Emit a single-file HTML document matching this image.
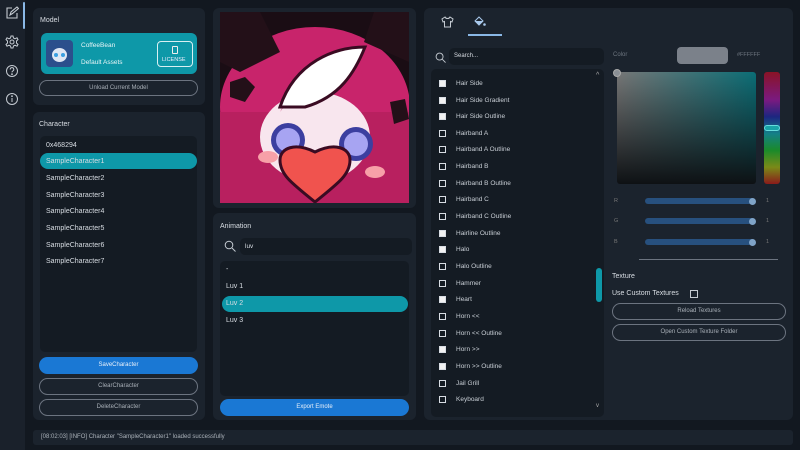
<!DOCTYPE html>
<html><head><meta charset="utf-8"><style>
*{margin:0;padding:0;box-sizing:border-box}
body{width:800px;height:450px;background:#121820;font-family:"Liberation Sans",sans-serif;color:#d8dde3;font-size:7px;position:relative;overflow:hidden}
.a{position:absolute}
.side{left:0;top:0;width:25px;height:450px;background:#1a212b}
.panel{background:#1b232d;border-radius:6px}
.list{background:#141b23;border-radius:5px}
.btn{border:1px solid #6c7480;border-radius:9px;text-align:center;color:#a9b0b8;font-size:6px}
.h{font-size:7px;color:#d8dde3}
.row{position:absolute;left:6px;font-size:7px;color:#d8dde3}
.cb{position:absolute;left:8px;width:7px;height:7px;border:1px solid #d8dde3}
.cb.f{background:#f2f2f2}
.it{position:absolute;left:25px;font-size:6.5px;color:#c8ced5}
.sl{height:6px;border-radius:3px;background:#27507e}
.knob{width:7px;height:7px;border-radius:50%;background:#7fa3c7;top:-0.5px}
</style></head><body>
<div class="a side">
 <div class="a" style="left:23px;top:2px;width:2px;height:27px;background:#8ab8e6;border-radius:1px"></div>
 <svg class="a" style="left:5px;top:6px" width="14" height="14" viewBox="0 0 14 14" fill="none" stroke="#c5cbd2" stroke-width="1.1"><path d="M7 2H2v10h10V7"/><path d="M5 9l1-3 6-5 1.5 1.5-6 5z"/></svg>
 <svg class="a" style="left:5px;top:35px" width="14" height="14" viewBox="0 0 14 14" fill="none" stroke="#c5cbd2" stroke-width="1"><circle cx="7" cy="7" r="2"/><path d="M6 1h2l.5 2 1.5.8 2-1 1 1.7-1.5 1.5v2l1.5 1.5-1 1.7-2-1-1.5.8L8 13H6l-.5-2-1.5-.8-2 1-1-1.7L2.5 8V6L1 4.5l1-1.7 2 1 1.5-.8z"/></svg>
 <svg class="a" style="left:5px;top:64px" width="14" height="14" viewBox="0 0 14 14" fill="none" stroke="#c5cbd2" stroke-width="1"><circle cx="7" cy="7" r="5.5"/><path d="M5.2 5.5a1.8 1.8 0 1 1 2.5 1.6c-.6.3-.7.7-.7 1.3"/><circle cx="7" cy="10.2" r=".4" fill="#c5cbd2"/></svg>
 <svg class="a" style="left:5px;top:92px" width="14" height="14" viewBox="0 0 14 14" fill="none" stroke="#c5cbd2" stroke-width="1"><circle cx="7" cy="7" r="5.5"/><path d="M7 6v4"/><circle cx="7" cy="4.2" r=".4" fill="#c5cbd2"/></svg>
</div>

<!-- Model -->
<div class="a panel" style="left:33px;top:8px;width:172px;height:97px">
 <div class="a h" style="left:7px;top:9px">Model</div>
 <div class="a" style="left:8px;top:25px;width:156px;height:41px;background:#0e98a8;border-radius:6px">
  <div class="a" style="left:5px;top:7px;width:27px;height:27px;border-radius:4px;background:#2b4f8c"><div class="a" style="left:6px;top:8px;width:15px;height:14px;background:#dfe6f3;border-radius:50%"></div><div class="a" style="left:8px;top:13px;width:4px;height:4px;background:#3a9fe0;border-radius:50%"></div><div class="a" style="left:15px;top:13px;width:4px;height:4px;background:#3a9fe0;border-radius:50%"></div></div>
  <div class="a" style="left:40px;top:9px;font-size:6.5px;color:#e8f5f7">CoffeeBean</div>
  <div class="a" style="left:40px;top:26px;font-size:6.5px;color:#e8f5f7">Default Assets</div>
  <div class="a" style="left:116px;top:8px;width:36px;height:26px;border:1px solid #d8f0f3;border-radius:4px"><div class="a" style="left:14px;top:4px;width:6px;height:8px;border:1px solid #eee;border-radius:1px"></div><div class="a" style="left:4px;top:15px;font-size:5.5px;color:#eef">LICENSE</div></div>
 </div>
 <div class="a btn" style="left:6px;top:72px;width:159px;height:16px;line-height:14px">Unload Current Model</div>
</div>

<!-- Character -->
<div class="a panel" style="left:33px;top:112px;width:172px;height:308px">
 <div class="a h" style="left:6px;top:9px">Character</div>
 <div class="a list" style="left:7px;top:24px;width:157px;height:216px">
  <div class="row" style="top:6px">0x468294</div>
  <div class="a" style="left:0;top:17px;width:157px;height:16px;background:#0e98a8;border-radius:8px"></div>
  <div class="row" style="top:22px">SampleCharacter1</div>
  <div class="row" style="top:39px">SampleCharacter2</div>
  <div class="row" style="top:56px">SampleCharacter3</div>
  <div class="row" style="top:72px">SampleCharacter4</div>
  <div class="row" style="top:89px">SampleCharacter5</div>
  <div class="row" style="top:106px">SampleCharacter6</div>
  <div class="row" style="top:122px">SampleCharacter7</div>
 </div>
 <div class="a" style="left:6px;top:245px;width:159px;height:17px;background:#1a78d4;border-radius:9px;text-align:center;line-height:17px;font-size:6px;color:#e8f0fa">SaveCharacter</div>
 <div class="a btn" style="left:6px;top:266px;width:159px;height:17px;line-height:15px">ClearCharacter</div>
 <div class="a btn" style="left:6px;top:287px;width:159px;height:17px;line-height:15px">DeleteCharacter</div>
</div>

<!-- Image -->
<div class="a panel" style="left:213px;top:8px;width:203px;height:200px">
 <svg class="a" style="left:7px;top:4px" width="189" height="191" viewBox="0 0 189 191">
  <rect width="189" height="191" rx="3" fill="#1a0d14"/>
  <ellipse cx="95" cy="95" rx="95" ry="80" fill="#c8246b"/>
  <rect x="0" y="100" width="189" height="91" fill="#b8205f"/>
  <path d="M0 0h40l20 40-40 20-20-10z" fill="#231018"/>
  <path d="M189 0h-35l-10 30 45 20z" fill="#231018"/>
  <ellipse cx="95" cy="125" rx="55" ry="45" fill="#f8e6ee"/>
  <path d="M60 100c20-30 60-35 90-5l-10-40-50-10z" fill="#c8246b"/>
  <path d="M60 95c15-45 55-60 85-60-10 25-25 50-60 60z" fill="#ffffff" stroke="#3a0b22" stroke-width="3"/>
  <ellipse cx="68" cy="128" rx="17" ry="17" fill="#3c3fa0"/><ellipse cx="68" cy="128" rx="12" ry="12" fill="#a7a4f2"/>
  <ellipse cx="136" cy="132" rx="17" ry="17" fill="#3c3fa0"/><ellipse cx="136" cy="132" rx="12" ry="12" fill="#a7a4f2"/>
  <ellipse cx="48" cy="145" rx="10" ry="6" fill="#f7a0a8"/><ellipse cx="155" cy="160" rx="10" ry="6" fill="#f7a0a8"/>
  <path d="M95 190c-25-20-35-28-35-42 0-12 15-18 35-8 20-10 35-4 35 8 0 14-10 22-35 42z" fill="#f0534e" stroke="#3a0b22" stroke-width="3"/>
  <path d="M10 70l15-5 10 10-10 15-15-5z" fill="#231018"/><path d="M170 90l15-3 4 20-15 5z" fill="#231018"/>
 </svg>
</div>

<!-- Animation -->
<div class="a panel" style="left:213px;top:213px;width:203px;height:207px">
 <div class="a h" style="left:7px;top:10px">Animation</div>
 <svg class="a" style="left:11px;top:27px" width="12" height="12" viewBox="0 0 12 12" fill="none" stroke="#c5cbd2" stroke-width="1"><circle cx="5" cy="5" r="3.8"/><path d="M8 8l3.5 3.5"/></svg>
 <div class="a list" style="left:27px;top:25px;width:172px;height:17px"><div class="a" style="left:5px;top:5px;font-size:6.5px">luv</div></div>
 <div class="a list" style="left:7px;top:48px;width:189px;height:135px">
  <div class="row" style="top:5px">-</div>
  <div class="row" style="top:22px">Luv 1</div>
  <div class="a" style="left:2px;top:35px;width:186px;height:16px;background:#0e98a8;border-radius:8px"></div>
  <div class="row" style="top:39px">Luv 2</div>
  <div class="row" style="top:56px">Luv 3</div>
 </div>
 <div class="a" style="left:7px;top:186px;width:189px;height:17px;background:#1a78d4;border-radius:9px;text-align:center;line-height:17px;font-size:6px;color:#e8f0fa">Export Emote</div>
</div>

<!-- Right -->
<div class="a panel" style="left:424px;top:8px;width:369px;height:412px">
 <svg class="a" style="left:17px;top:8px" width="13" height="12" viewBox="0 0 13 12" fill="none" stroke="#c5cbd2" stroke-width="1"><path d="M4 1L1 3l1 3 1.5-.5V11h6V5.5L11 6l1-3-3-2c-.5 1.2-1.5 1.5-2.5 1.5S4.5 2.2 4 1z"/></svg>
 <svg class="a" style="left:49px;top:7px" width="13" height="13" viewBox="0 0 13 13" fill="#a9c9ec"><path d="M2 6l4-4 4 4-4 4z" fill="none" stroke="#a9c9ec"/><path d="M2 6h8l-4 4z"/><circle cx="11.5" cy="9.5" r="1.3"/></svg>
 <div class="a" style="left:44px;top:26px;width:34px;height:2px;background:#8ab8e6"></div>
 <svg class="a" style="left:11px;top:44px" width="11" height="11" viewBox="0 0 12 12" fill="none" stroke="#c5cbd2" stroke-width="1"><circle cx="5" cy="5" r="3.8"/><path d="M8 8l3.5 3.5"/></svg>
 <div class="a list" style="left:25px;top:40px;width:155px;height:17px"><div class="a" style="left:5px;top:5px;font-size:6px">Search...</div></div>
 <div class="a list" style="left:7px;top:61px;width:173px;height:348px">
  <div class="a" style="left:165px;top:3px;font-size:7px;color:#aaa">^</div>
  <div class="a" style="left:165px;top:199px;width:6px;height:34px;background:#0e98a8;border-radius:3px"></div>
  <div class="a" style="left:165px;top:334px;font-size:6px;color:#aaa">v</div>
  <div class="cb f" style="top:11px"></div><div class="it" style="top:11px">Hair Side</div>
  <div class="cb f" style="top:28px"></div><div class="it" style="top:28px">Hair Side Gradient</div>
  <div class="cb f" style="top:44px"></div><div class="it" style="top:44px">Hair Side Outline</div>
  <div class="cb" style="top:61px"></div><div class="it" style="top:61px">Hairband A</div>
  <div class="cb" style="top:77px"></div><div class="it" style="top:77px">Hairband A Outline</div>
  <div class="cb" style="top:94px"></div><div class="it" style="top:94px">Hairband B</div>
  <div class="cb" style="top:111px"></div><div class="it" style="top:111px">Hairband B Outline</div>
  <div class="cb" style="top:127px"></div><div class="it" style="top:127px">Hairband C</div>
  <div class="cb" style="top:144px"></div><div class="it" style="top:144px">Hairband C Outline</div>
  <div class="cb f" style="top:161px"></div><div class="it" style="top:161px">Hairline Outline</div>
  <div class="cb f" style="top:177px"></div><div class="it" style="top:177px">Halo</div>
  <div class="cb" style="top:194px"></div><div class="it" style="top:194px">Halo Outline</div>
  <div class="cb" style="top:211px"></div><div class="it" style="top:211px">Hammer</div>
  <div class="cb f" style="top:227px"></div><div class="it" style="top:227px">Heart</div>
  <div class="cb" style="top:244px"></div><div class="it" style="top:244px">Horn &lt;&lt;</div>
  <div class="cb" style="top:261px"></div><div class="it" style="top:261px">Horn &lt;&lt; Outline</div>
  <div class="cb f" style="top:277px"></div><div class="it" style="top:277px">Horn &gt;&gt;</div>
  <div class="cb f" style="top:294px"></div><div class="it" style="top:294px">Horn &gt;&gt; Outline</div>
  <div class="cb" style="top:311px"></div><div class="it" style="top:311px">Jail Grill</div>
  <div class="cb" style="top:327px"></div><div class="it" style="top:327px">Keyboard</div>
 </div>
 <div class="a" style="left:189px;top:44px;font-size:6px;color:#6e7680">Color</div>
 <div class="a" style="left:253px;top:39px;width:51px;height:17px;background:#7b818a;border-radius:4px"></div>
 <div class="a" style="left:313px;top:44px;font-size:5.5px;color:#6e7680">#FFFFFF</div>
 <div class="a" style="left:193px;top:64px;width:139px;height:112px;border-radius:3px;background:linear-gradient(to top,#0e1114,rgba(14,17,20,0)),linear-gradient(to right,#777,#0b6e76)"></div>
 <div class="a" style="left:189px;top:61px;width:8px;height:8px;border-radius:50%;background:#8a8f95;border:1px solid #aaa"></div>
 <div class="a" style="left:340px;top:64px;width:16px;height:112px;border-radius:3px;background:linear-gradient(#8a1326,#7a1a80 25%,#1c2680 40%,#148088 55%,#1a8a2a 70%,#7a8a18 85%,#8a1a1a)"></div>
 <div class="a" style="left:340px;top:117px;width:16px;height:6px;border-radius:3px;background:#1aa4a8;border:1px solid #6dd"></div>
 <div class="a" style="left:190px;top:190px;font-size:5.5px;color:#777">R</div>
 <div class="a" style="left:190px;top:210px;font-size:5.5px;color:#777">G</div>
 <div class="a" style="left:190px;top:231px;font-size:5.5px;color:#777">B</div>
 <div class="a sl" style="left:221px;top:190px;width:110px"><div class="a knob" style="left:104px"></div></div>
 <div class="a sl" style="left:221px;top:210px;width:110px"><div class="a knob" style="left:104px"></div></div>
 <div class="a sl" style="left:221px;top:231px;width:110px"><div class="a knob" style="left:104px"></div></div>
 <div class="a" style="left:342px;top:190px;font-size:5.5px;color:#777">1</div>
 <div class="a" style="left:342px;top:210px;font-size:5.5px;color:#777">1</div>
 <div class="a" style="left:342px;top:231px;font-size:5.5px;color:#777">1</div>
 <div class="a" style="left:215px;top:251px;width:139px;height:1px;background:#6c7480"></div>
 <div class="a" style="left:188px;top:265px;font-size:7px">Texture</div>
 <div class="a" style="left:188px;top:282px;font-size:7px">Use Custom Textures</div>
 <div class="a" style="left:266px;top:282px;width:8px;height:8px;border:1px solid #c5cbd2"></div>
 <div class="a btn" style="left:188px;top:295px;width:174px;height:17px;line-height:15px">Reload Textures</div>
 <div class="a btn" style="left:188px;top:316px;width:174px;height:17px;line-height:15px">Open Custom Texture Folder</div>
</div>

<!-- Status -->
<div class="a" style="left:33px;top:430px;width:760px;height:15px;background:#1b232d;border-radius:3px"><div class="a" style="left:8px;top:4px;font-size:6px;color:#aab1b9">[08:02:03] [INFO] Character "SampleCharacter1" loaded successfully</div></div>
</body></html>
